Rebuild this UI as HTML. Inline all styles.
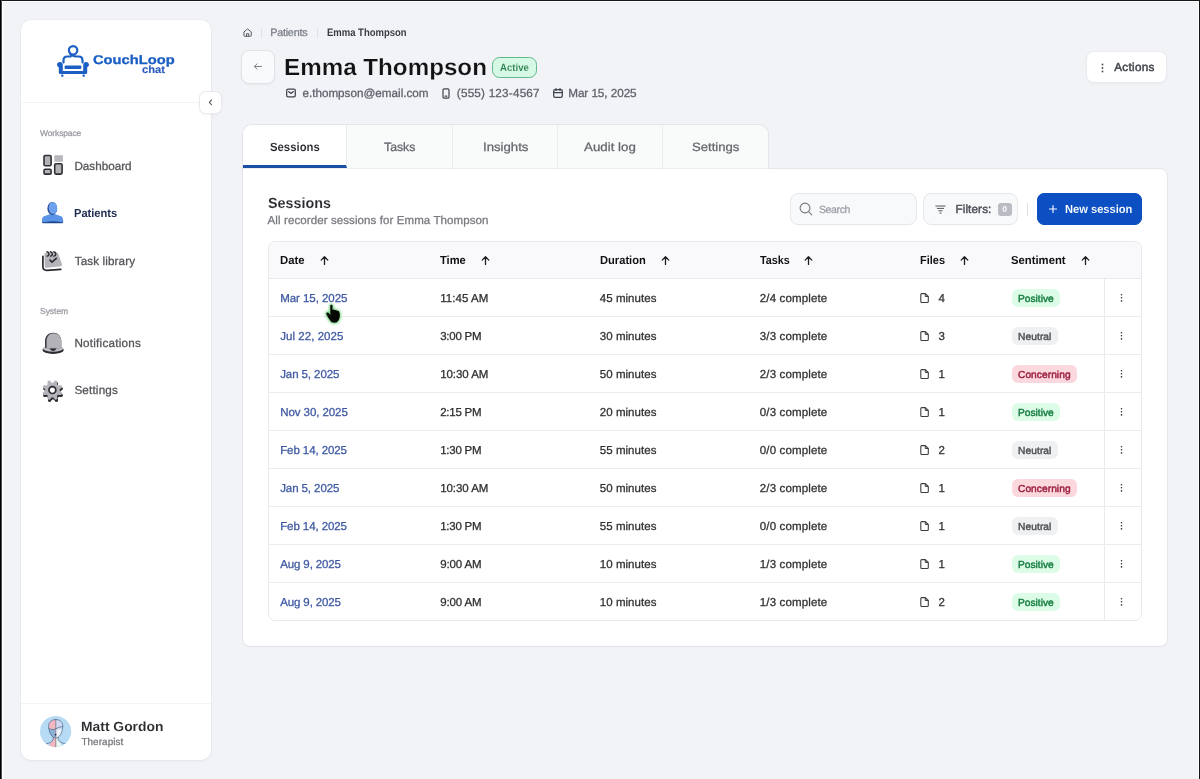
<!DOCTYPE html>
<html lang="en">
<head>
<meta charset="utf-8">
<title>CouchLoop chat - Emma Thompson - Sessions</title>
<style>
*{box-sizing:border-box;margin:0;padding:0}
html,body{width:1200px;height:779px;overflow:hidden}
body{background:#f1f3f7;font-family:"Liberation Sans",sans-serif;color:#2b2d33;position:relative;text-rendering:geometricPrecision}
#app{position:absolute;left:0;top:0;width:1200px;height:779px;overflow:hidden;background:#f1f3f7;filter:blur(.3px)}
.a{position:absolute}
.t{position:absolute;white-space:nowrap;line-height:1;transform-origin:0 50%;font-weight:400;text-decoration:none;-webkit-text-stroke:.28px}
.t.md{-webkit-text-stroke:.45px}
svg{position:absolute;overflow:visible}
#sidebar{position:absolute;left:21px;top:20px;width:190px;height:740px;background:#fff;border-radius:10px;box-shadow:0 0 0 1px rgba(30,40,70,.025),0 1px 3px rgba(30,40,70,.05)}
.hr{position:absolute;height:1px;background:#f2f3f5}
#collapse{position:absolute;left:199px;top:91px;width:22.5px;height:22.5px;background:#fff;border:1px solid #e8e9ed;border-radius:6.5px;box-shadow:0 1px 2px rgba(30,40,70,.05)}
#main{position:absolute;left:243px;top:169px;width:924px;height:477px;background:#fff;border-radius:0 7px 7px 7px;box-shadow:0 0 0 1px rgba(20,20,30,.05),0 1px 1px rgba(20,20,30,.02)}
#tabs{position:absolute;left:243px;top:125px;width:525px;height:44px;background:#f9fafa;border-radius:9px 9px 0 0;box-shadow:0 0 0 1px rgba(20,25,40,.06)}
.tab{position:absolute;top:0;height:44px;border-right:1px solid #ecedef}
.tab.on{background:#fff;border-bottom:3px solid #1b4fa3;height:43px;border-radius:9px 0 0 0;border-right:1px solid #e6e8ea}
.btn{position:absolute;border:1px solid #e4e6ea;border-radius:8px;background:#fff}
.badge{position:absolute;border-radius:6px}
#tbl{position:absolute;left:268px;top:241px;width:874px;height:380px;border:1px solid #e8e9eb;border-radius:7px;background:#fff;overflow:hidden}
#thead{position:absolute;left:0;top:0;width:874px;height:37px;background:#f9f9fb;border-bottom:1px solid #e9eaec}
.rl{position:absolute;left:0;width:874px;height:1px;background:#ebeced}
.vl{position:absolute;left:835px;top:37px;width:1px;height:343px;background:#e9eaec}
</style>
</head>
<body>
<div id="app">
<aside aria-label="Sidebar">
<div id="sidebar"></div>
<div class="hr" style="left:21px;top:102px;width:190px"></div>
<div class="hr" style="left:21px;top:703px;width:190px"></div>
<div id="collapse"><svg style="left:7px;top:6px" width="8" height="9" viewBox="0 0 8 9"><path d="M4.5 2L2.3 4.3l2.2 2.3" fill="none" stroke="#5a5e66" stroke-width="1.15" stroke-linecap="round" stroke-linejoin="round"/></svg></div>
<svg style="left:57px;top:45px" width="32" height="32" viewBox="0 0 32 32">
<g fill="none" stroke="#1b5fc4" stroke-width="2.2" stroke-linecap="round" stroke-linejoin="round"><circle cx="16.1" cy="5.3" r="4.2"/><path d="M6.5 17.4v-2.1c0-2.3 1.5-3.8 3.8-3.8h3.4M12.9 8.3c1.6 2.8 3.8 3.2 6.8 3.2h2c2.3 0 3.8 1.5 3.8 3.8v2.1"/></g>
<path d="M2.9 17.1c-1.7 0-2.9 1.2-2.9 2.7 0 1.2.7 2.1 1.8 2.5v5.3c0 .9.6 1.5 1.5 1.5h25.4c.9 0 1.5-.6 1.5-1.5v-5.3c1.1-.4 1.8-1.3 1.8-2.5 0-1.5-1.2-2.7-2.9-2.7s-2.9 1.2-2.9 2.9v6H5.8v-6c0-1.7-1.2-2.9-2.9-2.9z" fill="#1b5fc4"/>
<rect x="7.6" y="20.4" width="16.8" height="3.5" rx="1.2" fill="#1b5fc4"/>
<rect x="4.2" y="29.6" width="2.2" height="2.2" rx="0.5" fill="#1b5fc4"/>
<rect x="25.6" y="29.6" width="2.2" height="2.2" rx="0.5" fill="#1b5fc4"/>
</svg>
<span class="t" style="left:93.0px;top:54.00px;font-size:12.7px;color:#1b5fc4;font-weight:700;-webkit-text-stroke:0.3px #1b5fc4;transform:scaleX(1.158)">CouchLoop</span>
<span class="t" style="left:142.0px;top:65.00px;font-size:10.5px;color:#2a5cbc;font-weight:700;-webkit-text-stroke:0.15px #2a5cbc;transform:scaleX(1.065)">chat</span>
<span class="t" style="left:40.0px;top:129.00px;font-size:8.5px;color:#9a9ca2;letter-spacing:-0.13px">Workspace</span>
<nav>
<svg style="left:42px;top:154px" width="22" height="22" viewBox="0 0 22 22">
<rect x="12.3" y="1.2" width="8.6" height="6.6" rx="0.5" fill="#b7b7bb"/>
<rect x="2" y="1.5" width="7.1" height="10.2" rx="1.3" fill="#b2b2b7" stroke="#2e2e34" stroke-width="1.6"/>
<rect x="2" y="15.3" width="7.1" height="4.8" rx="1.2" fill="#b2b2b7" stroke="#2e2e34" stroke-width="1.6"/>
<rect x="12.7" y="9.7" width="7.4" height="10.4" rx="1.3" fill="#b2b2b7" stroke="#2e2e34" stroke-width="1.6"/>
</svg>
<a class="t" style="left:74.4px;top:161.00px;font-size:11.7px;color:#535459">Dashboard</a>
<svg style="left:41px;top:202px" width="23" height="22" viewBox="0 0 23 22">
<path d="M1 19.8c0-3.1 1.1-4.7 3.6-5.3l4.2-1.5h5.6l4.2 1.5c2.5.6 3.6 2.2 3.6 5.3 0 1-.6 1.5-1.7 1.5H2.7C1.6 21.3 1 20.8 1 19.8z" fill="#1f4690"/>
<path d="M1 18.9c0-3.1 1.1-4.5 3.6-5.1l4.2-1.5h5.6l4.2 1.5c2.5.6 3.6 2 3.6 5.1 0 .9-.6 1.3-1.7 1.3-6-1.3-10.6-1.3-16.8 0C1.6 20.2 1 19.8 1 18.9z" fill="#5b93e6"/>
<ellipse cx="11.3" cy="6.5" rx="4.9" ry="6.5" fill="#1f4690"/>
<ellipse cx="11.9" cy="6" rx="4.3" ry="5.9" fill="#6ea2ee"/>
</svg>
<a class="t" style="left:74.4px;top:208.00px;font-size:11.7px;color:#1d2c50;font-weight:700;-webkit-text-stroke:0;transform:scaleX(0.950)">Patients</a>
<svg style="left:41.2px;top:250px" width="22" height="22" viewBox="0 0 22 22">
<path d="M1.9 6.3V16.4c0 2.7 1.4 4 4.2 3.9L19.8 19.4" fill="none" stroke="#2b2b31" stroke-width="1.7" stroke-linecap="round" stroke-linejoin="round"/>
<path d="M3.4 4.2c0-1.1.7-1.8 1.8-1.8l10.2.2c1 0 1.7.5 2 1.4l3.6 10.2c.4 1.1-.2 2-1.4 2.1L5.8 17.7c-1.2.1-2-.6-2-1.8z" fill="#b4b4ba"/>
<path d="M6 1.8c1.4.2 2 1 2 2.1s-.6 2-1.9 2.2M9.4 1.8c1.4.2 2 1 2 2.1s-.6 2-1.9 2.2M12.8 1.8c1.4.2 2 1 2 2.1s-.6 2-1.9 2.2" fill="none" stroke="#2b2b31" stroke-width="1.4" stroke-linecap="round"/>
<path d="M9 10.2l2 1.9 4.3-3.8" fill="none" stroke="#2b2b31" stroke-width="1.7" stroke-linecap="round" stroke-linejoin="round"/>
</svg>
<a class="t" style="left:74.8px;top:256.00px;font-size:11.7px;color:#535459;letter-spacing:0.10px">Task library</a>
<span class="t" style="left:40.0px;top:307.00px;font-size:8.5px;color:#9a9ca2;letter-spacing:-0.03px">System</span>
<svg style="left:41.5px;top:332px" width="22" height="22" viewBox="0 0 22 22">
<ellipse cx="11.1" cy="18" rx="10.7" ry="3.9" fill="#2b2b31"/>
<ellipse cx="11.1" cy="16.6" rx="10.1" ry="3.1" fill="#bcbcc2"/>
<path d="M3.1 15.8V9.1C3.1 4 6.5.7 11.2.7c4.7 0 8.1 3.3 8.1 8.4v6.7c-2.8 1-13.4 1-16.2 0z" fill="#2b2b31"/>
<path d="M4.5 16V9.3c0-4.9 2.9-8.1 7-8.1 4.5 0 7.8 3.2 7.8 8.1v6.5c-3 1-11.8 1.1-14.8.2z" fill="#b2b2b8"/>
<path d="M7.9 16.2c.5 1.9 1.6 2.7 3.2 2.7s2.7-.8 3.2-2.7c-2 .3-4.4.3-6.4 0z" fill="#2b2b31"/>
</svg>
<a class="t" style="left:74.4px;top:338.00px;font-size:11.7px;color:#535459;letter-spacing:0.23px">Notifications</a>
<svg style="left:41.5px;top:380px" width="22" height="22" viewBox="0 0 22 22">
<path d="M18.5 12.0L18.5 12.5L18.7 13.0L19.8 13.8L20.9 14.7L20.9 15.4L20.7 16.0L20.4 16.6L19.9 17.1L18.5 17.0L17.1 16.7L16.6 16.9L16.3 17.3L15.9 17.6L15.7 18.1L16.0 19.5L16.1 20.9L15.6 21.4L15.0 21.7L14.4 21.9L13.7 21.9L12.8 20.8L12.0 19.7L11.5 19.5L11.0 19.5L10.5 19.5L10.0 19.7L9.2 20.8L8.3 21.9L7.6 21.9L7.0 21.7L6.4 21.4L5.9 20.9L6.0 19.5L6.3 18.1L6.1 17.6L5.7 17.3L5.4 16.9L4.9 16.7L3.5 17.0L2.1 17.1L1.6 16.6L1.3 16.0L1.1 15.4L1.1 14.7L2.2 13.8L3.3 13.0L3.5 12.5L3.5 12.0L3.5 11.5L3.3 11.0L2.2 10.2L1.1 9.3L1.1 8.6L1.3 8.0L1.6 7.4L2.1 6.9L3.5 7.0L4.9 7.3L5.4 7.1L5.7 6.7L6.1 6.4L6.3 5.9L6.0 4.5L5.9 3.1L6.4 2.6L7.0 2.3L7.6 2.1L8.3 2.1L9.2 3.2L10.0 4.3L10.5 4.5L11.0 4.5L11.5 4.5L12.0 4.3L12.8 3.2L13.7 2.1L14.4 2.1L15.0 2.3L15.6 2.6L16.1 3.1L16.0 4.5L15.7 5.9L15.9 6.4L16.3 6.7L16.6 7.1L17.1 7.3L18.5 7.0L19.9 6.9L20.4 7.4L20.7 8.0L20.9 8.6L20.9 9.3L19.8 10.2L18.7 11.0L18.5 11.5Z" fill="#2b2b31"/>
<path d="M17.7 10.1L17.7 10.6L17.8 11.1L18.9 11.8L20.0 12.7L20.0 13.3L19.7 14.0L19.5 14.6L19.0 15.0L17.6 14.9L16.4 14.7L15.9 14.9L15.6 15.3L15.2 15.6L15.0 16.1L15.2 17.3L15.3 18.7L14.9 19.2L14.3 19.4L13.6 19.7L13.0 19.7L12.1 18.6L11.4 17.5L10.9 17.4L10.4 17.4L9.9 17.4L9.4 17.5L8.7 18.6L7.8 19.7L7.2 19.7L6.5 19.4L5.9 19.2L5.5 18.7L5.6 17.3L5.8 16.1L5.6 15.6L5.2 15.3L4.9 14.9L4.4 14.7L3.2 14.9L1.8 15.0L1.3 14.6L1.1 14.0L0.8 13.3L0.8 12.7L1.9 11.8L3.0 11.1L3.1 10.6L3.1 10.1L3.1 9.6L3.0 9.1L1.9 8.4L0.8 7.5L0.8 6.9L1.1 6.2L1.3 5.6L1.8 5.2L3.2 5.3L4.4 5.5L4.9 5.3L5.2 4.9L5.6 4.6L5.8 4.1L5.6 2.9L5.5 1.5L5.9 1.0L6.5 0.8L7.2 0.5L7.8 0.5L8.7 1.6L9.4 2.7L9.9 2.8L10.4 2.8L10.9 2.8L11.4 2.7L12.1 1.6L13.0 0.5L13.6 0.5L14.3 0.8L14.9 1.0L15.3 1.5L15.2 2.9L15.0 4.1L15.2 4.6L15.6 4.9L15.9 5.3L16.4 5.5L17.6 5.3L19.0 5.2L19.5 5.6L19.7 6.2L20.0 6.9L20.0 7.5L18.9 8.4L17.8 9.1L17.7 9.6Z" fill="#b4b4ba"/>
<circle cx="10.4" cy="10.1" r="3.4" fill="#fff" stroke="#2b2b31" stroke-width="1.7"/>
</svg>
<a class="t" style="left:74.4px;top:385.00px;font-size:11.7px;color:#535459;letter-spacing:0.17px">Settings</a>
</nav>
<svg style="left:39.7px;top:715.7px" width="31.2" height="31.2" viewBox="0 0 32 32">
<defs><clipPath id="avc"><circle cx="16" cy="16" r="16"/></clipPath></defs>
<circle cx="16" cy="16" r="16" fill="#b7dbf4"/>
<g clip-path="url(#avc)">
<path d="M16.2 3.6c-4.4 0-7.4 2.8-7.4 7 0 1.1.2 2.2.5 3.2h6.9z" fill="#f2b8c2"/>
<path d="M16.2 3.6c4.4 0 7.2 2.8 7.2 7 0 1.1-.2 2.2-.5 3.2h-6.7z" fill="#cfd9f2"/>
<path d="M9.3 13.8c.5 3.8 2.3 6.8 4.6 8.1l2.3.6v-8.7z" fill="#8db0d6"/>
<path d="M22.9 13.8c-.5 3.8-2.2 6.8-4.5 8.1l-2.2.6v-8.7z" fill="#edf3fb"/>
<path d="M13.7 22.3l-.3 2.2c-.6 1.6-2 2.8-3.6 3.7V33h6.4V22.5z" fill="#f2b8c2"/>
<path d="M18.6 22.3l.3 2.2c.5 1.5 1.5 2.6 2.8 3.5V33h-5.5V22.5z" fill="#e9f5f1"/>
<g fill="none" stroke="#4d6b8c" stroke-width="0.75" stroke-linecap="round" stroke-linejoin="round">
<path d="M16.2 3.6c-4.4 0-7.4 2.8-7.4 7 0 1.1.2 2.2.5 3.2.5 3.8 2.3 6.8 4.6 8.1 1.5.7 3 .7 4.5 0 2.3-1.3 4-4.3 4.5-8.1.3-1 .5-2.1.5-3.2 0-4.2-2.8-7-7.2-7z"/>
<path d="M9 12.8c2.4 1.3 4.8 1.4 7.2.4 2.4-1.4 4.8-2.2 7-2.2M13.7 22.3l-.3 2.2c-.9 2.2-3.6 3.4-6.9 4M18.6 22.3l.3 2.2c.9 2.2 3.6 3.4 7 4"/>
</g>
<path d="M16.2 3.8V32" fill="none" stroke="#7a5d72" stroke-width="0.7"/>
<ellipse cx="16" cy="19.3" rx="1" ry="0.8" fill="#16263f"/>
</g>
</svg>
<span class="t" style="left:80.8px;top:720.00px;font-size:13.3px;color:#2a2a2f;font-weight:700;-webkit-text-stroke:0.08px #fff;transform:scaleX(1.043)">Matt Gordon</span>
<span class="t" style="left:81.4px;top:738.00px;font-size:9.9px;color:#77787d;letter-spacing:0.10px">Therapist</span>
</aside>
<header>
<svg style="left:242.5px;top:28.2px" width="9.2" height="9.2" viewBox="0 0 10 10"><path d="M1 4.3L5 1l4 3.3V8.2c0 .5-.3.8-.8.8H1.8C1.3 9 1 8.7 1 8.2z" fill="none" stroke="#4b4f58" stroke-width="1" stroke-linejoin="round"/><path d="M3.8 9V6.2h2.4V9" fill="none" stroke="#4b4f58" stroke-width="1"/></svg>
<div class="a" style="left:261px;top:28px;width:1px;height:10px;background:#dfe1e6"></div>
<a class="t" style="left:270.2px;top:28.00px;font-size:10.8px;color:#7c8089;letter-spacing:-0.23px">Patients</a>
<div class="a" style="left:317px;top:28px;width:1px;height:10px;background:#dfe1e6"></div>
<span class="t" style="left:326.8px;top:28.00px;font-size:10.8px;color:#3a3c44;font-weight:700;-webkit-text-stroke:0;transform:scaleX(0.879)">Emma Thompson</span>
<div class="btn" style="left:241px;top:50px;width:33.5px;height:33.5px;background:#f9fafb;border-color:#e0e2e6;border-radius:8px;box-shadow:0 1px 2px rgba(30,40,70,.05)"><svg style="left:10.8px;top:10.9px" width="10" height="9" viewBox="0 0 10 9"><path d="M8.4 4.5H1.4M4.1 1.8L1.4 4.5l2.7 2.7" fill="none" stroke="#7b7f88" stroke-width="1" stroke-linecap="round" stroke-linejoin="round"/></svg></div>
<h1 class="t" style="left:283.8px;top:56.00px;font-size:23.4px;color:#121214;font-weight:700;-webkit-text-stroke:0.25px #f1f3f7;transform:scaleX(1.034)">Emma Thompson</h1>
<div class="badge" style="left:492px;top:57px;width:44.5px;height:20.5px;background:#d5f9e4;border:1px solid #62b88a;border-radius:7.5px"></div>
<span class="t" style="left:499.6px;top:63.00px;font-size:10.5px;color:#257a4a;font-weight:700;-webkit-text-stroke:0.12px #d5f9e4;transform:scaleX(0.914)">Active</span>
<svg style="left:286px;top:88px" width="10" height="10" viewBox="0 0 10 10"><rect x=".7" y="1.2" width="8.6" height="7.6" rx="1.3" fill="none" stroke="#3f434b" stroke-width="1.25"/><path d="M2.6 3.6L5 5.4l2.4-1.8" fill="none" stroke="#3f434b" stroke-width="1.25" stroke-linecap="round" stroke-linejoin="round"/></svg>
<span class="t" style="left:302.4px;top:88.00px;font-size:11.7px;color:#5e626a">e.thompson@email.com</span>
<svg style="left:442px;top:87.5px" width="8" height="11" viewBox="0 0 8 11"><rect x="1" y=".8" width="6" height="9.4" rx="1.3" fill="none" stroke="#3f434b" stroke-width="1.2"/><path d="M3.2 8.2h1.6" stroke="#3f434b" stroke-width="1.25" stroke-linecap="round"/></svg>
<span class="t" style="left:456.8px;top:88.00px;font-size:11.7px;color:#5e626a;letter-spacing:0.22px">(555) 123-4567</span>
<svg style="left:552.5px;top:88px" width="10" height="10" viewBox="0 0 10 10"><rect x=".7" y="1.7" width="8.6" height="7.6" rx="1.3" fill="none" stroke="#3f434b" stroke-width="1.25"/><path d="M.8 4.5h8.4M3 .6v2M7 .6v2" fill="none" stroke="#3f434b" stroke-width="1.25" stroke-linecap="round"/></svg>
<span class="t" style="left:568.2px;top:88.00px;font-size:11.7px;color:#5e626a;letter-spacing:-0.04px">Mar 15, 2025</span>
<div class="btn" style="left:1086px;top:51px;width:81px;height:31.5px;border-color:#e9ebef;border-radius:8px;box-shadow:0 1px 2px rgba(30,40,70,.04)"></div>
<svg style="left:1100.5px;top:62.5px" width="3" height="10" viewBox="0 0 3 10"><circle cx="1.5" cy="1.5" r=".9" fill="#4a4d55"/><circle cx="1.5" cy="5" r=".9" fill="#4a4d55"/><circle cx="1.5" cy="8.5" r=".9" fill="#4a4d55"/></svg>
<span class="t md" style="left:1114.2px;top:62.00px;font-size:11.7px;color:#3f4249;letter-spacing:0.31px">Actions</span>
</header>
<nav aria-label="Patient sections">
<div id="tabs">
<div class="tab on" style="left:0px;width:104px"></div>
<div class="tab" style="left:104px;width:105.5px"></div>
<div class="tab" style="left:209.5px;width:105.0px"></div>
<div class="tab" style="left:314.5px;width:105.0px"></div>
<div class="tab" style="left:419.5px;width:105.5px;border-right:none"></div>
</div>
<a class="t" style="left:269.6px;top:141.00px;font-size:12px;color:#2a2a2f;font-weight:700;-webkit-text-stroke:0.06px #fff;transform:scaleX(0.945)">Sessions</a>
<a class="t" style="left:384.0px;top:141.00px;font-size:12px;color:#66686f;transform:scaleX(1.023)">Tasks</a>
<a class="t" style="left:482.6px;top:141.00px;font-size:12px;color:#66686f;transform:scaleX(1.098)">Insights</a>
<a class="t" style="left:584.0px;top:141.00px;font-size:12px;color:#66686f;transform:scaleX(1.109)">Audit log</a>
<a class="t" style="left:692.2px;top:141.00px;font-size:12px;color:#66686f;transform:scaleX(1.093)">Settings</a>
</nav>
<main>
<div id="main"></div>
<h2 class="t" style="left:267.6px;top:197.00px;font-size:14.7px;color:#2a2a2f;font-weight:700;-webkit-text-stroke:0.08px #fff;transform:scaleX(0.977)">Sessions</h2>
<span class="t" style="left:267.6px;top:216.00px;font-size:11.5px;color:#77797f;letter-spacing:0.10px">All recorder sessions for Emma Thompson</span>
<div class="btn" style="left:790px;top:193px;width:127px;height:32px;background:#f8f9fb;border-color:#e5e7eb;border-radius:8px"></div>
<svg style="left:799px;top:202px" width="14" height="14" viewBox="0 0 14 14"><circle cx="6" cy="6" r="4.9" fill="none" stroke="#74787f" stroke-width="1.1"/><path d="M9.6 9.6l3.2 3.2" stroke="#74787f" stroke-width="1.1" stroke-linecap="round"/></svg>
<span class="t" style="left:819.0px;top:205.00px;font-size:10.5px;color:#9da1a8;letter-spacing:-0.38px">Search</span>
<div class="btn" style="left:923px;top:193px;width:95px;height:32px;background:#f8f9fb;border-color:#e5e7eb;border-radius:8px"></div>
<svg style="left:934.5px;top:204.5px" width="11" height="9" viewBox="0 0 11 9"><path d="M.8 1h9.4M2.3 3.4h6.4M3.8 5.8h3.4M4.9 8.1h1.2" stroke="#55585f" stroke-width="1" stroke-linecap="round"/></svg>
<span class="t md" style="left:955.4px;top:204.00px;font-size:11.7px;color:#4e5158;letter-spacing:0.13px">Filters:</span>
<div class="badge" style="left:998px;top:202.5px;width:13.5px;height:13.5px;background:#b9bcc2;border-radius:3px"></div>
<span class="t" style="left:1002.2px;top:205.00px;font-size:8.5px;color:#fff;font-weight:700;-webkit-text-stroke:0;letter-spacing:0.47px">0</span>
<div class="a" style="left:1027px;top:203px;width:1px;height:13px;background:#dcdfe4"></div>
<div class="btn" style="left:1037px;top:193px;width:105px;height:32px;background:#0b4fc2;border-color:#0b4fc2;border-radius:7px"></div>
<svg style="left:1049px;top:205px" width="8" height="8" viewBox="0 0 8 8"><path d="M4 .5v7M.5 4h7" stroke="#fff" stroke-width="1.1" stroke-linecap="round"/></svg>
<span class="t" style="left:1065.4px;top:204.00px;font-size:11.7px;color:#fff;font-weight:700;-webkit-text-stroke:0.08px #0b4fc2;transform:scaleX(0.952)">New session</span>
<div id="tbl"><div id="thead"></div><div class="vl"></div>
<div class="rl" style="top:74px"></div>
<div class="rl" style="top:112px"></div>
<div class="rl" style="top:150px"></div>
<div class="rl" style="top:188px"></div>
<div class="rl" style="top:226px"></div>
<div class="rl" style="top:264px"></div>
<div class="rl" style="top:302px"></div>
<div class="rl" style="top:340px"></div>
</div>
<span class="t" style="left:280.2px;top:255.00px;font-size:11.6px;color:#111113;font-weight:700;-webkit-text-stroke:0;transform:scaleX(0.978)">Date</span>
<svg style="left:319.5px;top:255.7px" width="9" height="9" viewBox="0 0 9 9"><path d="M4.5 8.4V.9M1.2 4.1L4.5.8l3.3 3.3" fill="none" stroke="#1c1c20" stroke-width="1.3" stroke-linecap="round" stroke-linejoin="round"/></svg>
<span class="t" style="left:440.2px;top:255.00px;font-size:11.6px;color:#111113;font-weight:700;-webkit-text-stroke:0;transform:scaleX(0.961)">Time</span>
<svg style="left:480.5px;top:255.7px" width="9" height="9" viewBox="0 0 9 9"><path d="M4.5 8.4V.9M1.2 4.1L4.5.8l3.3 3.3" fill="none" stroke="#1c1c20" stroke-width="1.3" stroke-linecap="round" stroke-linejoin="round"/></svg>
<span class="t" style="left:599.8px;top:255.00px;font-size:11.6px;color:#111113;font-weight:700;-webkit-text-stroke:0;transform:scaleX(0.961)">Duration</span>
<svg style="left:660.5px;top:255.7px" width="9" height="9" viewBox="0 0 9 9"><path d="M4.5 8.4V.9M1.2 4.1L4.5.8l3.3 3.3" fill="none" stroke="#1c1c20" stroke-width="1.3" stroke-linecap="round" stroke-linejoin="round"/></svg>
<span class="t" style="left:759.8px;top:255.00px;font-size:11.6px;color:#111113;font-weight:700;-webkit-text-stroke:0;transform:scaleX(0.931)">Tasks</span>
<svg style="left:804.3px;top:255.7px" width="9" height="9" viewBox="0 0 9 9"><path d="M4.5 8.4V.9M1.2 4.1L4.5.8l3.3 3.3" fill="none" stroke="#1c1c20" stroke-width="1.3" stroke-linecap="round" stroke-linejoin="round"/></svg>
<span class="t" style="left:919.6px;top:255.00px;font-size:11.6px;color:#111113;font-weight:700;-webkit-text-stroke:0;transform:scaleX(0.946)">Files</span>
<svg style="left:959.5px;top:255.7px" width="9" height="9" viewBox="0 0 9 9"><path d="M4.5 8.4V.9M1.2 4.1L4.5.8l3.3 3.3" fill="none" stroke="#1c1c20" stroke-width="1.3" stroke-linecap="round" stroke-linejoin="round"/></svg>
<span class="t" style="left:1011.4px;top:255.00px;font-size:11.6px;color:#111113;font-weight:700;-webkit-text-stroke:0;transform:scaleX(0.974)">Sentiment</span>
<svg style="left:1080.5px;top:255.7px" width="9" height="9" viewBox="0 0 9 9"><path d="M4.5 8.4V.9M1.2 4.1L4.5.8l3.3 3.3" fill="none" stroke="#1c1c20" stroke-width="1.3" stroke-linecap="round" stroke-linejoin="round"/></svg>
<a class="t" style="left:280.2px;top:294.00px;font-size:11.5px;color:#3f59a2;letter-spacing:-0.05px">Mar 15, 2025</a>
<span class="t" style="left:440.2px;top:294.00px;font-size:11.5px;color:#303033;letter-spacing:0.06px">11:45 AM</span>
<span class="t" style="left:599.8px;top:294.00px;font-size:11.5px;color:#303033;letter-spacing:0.04px">45 minutes</span>
<span class="t" style="left:759.8px;top:294.00px;font-size:11.5px;color:#303033;letter-spacing:0.14px">2/4 complete</span>
<svg style="left:920px;top:293.0px" width="9" height="10" viewBox="0 0 9 10"><path d="M1.8.6h3.5L8.3 3.5v5c0 .6-.4 1-1 1H1.8c-.6 0-1-.4-1-1V1.6c0-.6.4-1 1-1z" fill="none" stroke="#3e3e42" stroke-width="1.1" stroke-linejoin="round"/><path d="M5.3.8v2.7h2.8" fill="none" stroke="#3e3e42" stroke-width="1" stroke-linejoin="round"/></svg>
<span class="t" style="left:938.6px;top:294.00px;font-size:11.5px;color:#303033">4</span>
<div class="badge" style="left:1012px;top:288.7px;width:48px;height:18.5px;background:#dcfce7"></div>
<span class="t md" style="left:1018.0px;top:295.00px;font-size:10.2px;color:#1a8044">Positive</span>
<svg style="left:1120px;top:293.2px" width="3" height="9" viewBox="0 0 3 9"><circle cx="1.5" cy="1.7" r=".8" fill="#2f3138"/><circle cx="1.5" cy="4.8" r=".8" fill="#2f3138"/><circle cx="1.5" cy="7.9" r=".8" fill="#2f3138"/></svg>
<a class="t" style="left:280.2px;top:332.00px;font-size:11.5px;color:#3f59a2;letter-spacing:0.05px">Jul 22, 2025</a>
<span class="t" style="left:440.2px;top:332.00px;font-size:11.5px;color:#303033;letter-spacing:-0.24px">3:00 PM</span>
<span class="t" style="left:599.8px;top:332.00px;font-size:11.5px;color:#303033;letter-spacing:0.04px">30 minutes</span>
<span class="t" style="left:759.8px;top:332.00px;font-size:11.5px;color:#303033;letter-spacing:0.14px">3/3 complete</span>
<svg style="left:920px;top:331.0px" width="9" height="10" viewBox="0 0 9 10"><path d="M1.8.6h3.5L8.3 3.5v5c0 .6-.4 1-1 1H1.8c-.6 0-1-.4-1-1V1.6c0-.6.4-1 1-1z" fill="none" stroke="#3e3e42" stroke-width="1.1" stroke-linejoin="round"/><path d="M5.3.8v2.7h2.8" fill="none" stroke="#3e3e42" stroke-width="1" stroke-linejoin="round"/></svg>
<span class="t" style="left:938.6px;top:332.00px;font-size:11.5px;color:#303033">3</span>
<div class="badge" style="left:1012px;top:326.7px;width:45.5px;height:18.5px;background:#eef0f1"></div>
<span class="t md" style="left:1018.0px;top:333.00px;font-size:10.2px;color:#505356;letter-spacing:0.09px">Neutral</span>
<svg style="left:1120px;top:331.2px" width="3" height="9" viewBox="0 0 3 9"><circle cx="1.5" cy="1.7" r=".8" fill="#2f3138"/><circle cx="1.5" cy="4.8" r=".8" fill="#2f3138"/><circle cx="1.5" cy="7.9" r=".8" fill="#2f3138"/></svg>
<a class="t" style="left:280.2px;top:370.00px;font-size:11.5px;color:#3f59a2;letter-spacing:-0.09px">Jan 5, 2025</a>
<span class="t" style="left:440.2px;top:370.00px;font-size:11.5px;color:#303033;letter-spacing:-0.06px">10:30 AM</span>
<span class="t" style="left:599.8px;top:370.00px;font-size:11.5px;color:#303033;letter-spacing:0.04px">50 minutes</span>
<span class="t" style="left:759.8px;top:370.00px;font-size:11.5px;color:#303033;letter-spacing:0.14px">2/3 complete</span>
<svg style="left:920px;top:369.0px" width="9" height="10" viewBox="0 0 9 10"><path d="M1.8.6h3.5L8.3 3.5v5c0 .6-.4 1-1 1H1.8c-.6 0-1-.4-1-1V1.6c0-.6.4-1 1-1z" fill="none" stroke="#3e3e42" stroke-width="1.1" stroke-linejoin="round"/><path d="M5.3.8v2.7h2.8" fill="none" stroke="#3e3e42" stroke-width="1" stroke-linejoin="round"/></svg>
<span class="t" style="left:938.6px;top:370.00px;font-size:11.5px;color:#303033">1</span>
<div class="badge" style="left:1012px;top:364.7px;width:65px;height:18.5px;background:#fbd7de"></div>
<span class="t md" style="left:1018.0px;top:371.00px;font-size:10.2px;color:#9c1f40;letter-spacing:0.05px">Concerning</span>
<svg style="left:1120px;top:369.2px" width="3" height="9" viewBox="0 0 3 9"><circle cx="1.5" cy="1.7" r=".8" fill="#2f3138"/><circle cx="1.5" cy="4.8" r=".8" fill="#2f3138"/><circle cx="1.5" cy="7.9" r=".8" fill="#2f3138"/></svg>
<a class="t" style="left:280.2px;top:408.00px;font-size:11.5px;color:#3f59a2;letter-spacing:-0.07px">Nov 30, 2025</a>
<span class="t" style="left:440.2px;top:408.00px;font-size:11.5px;color:#303033;letter-spacing:-0.24px">2:15 PM</span>
<span class="t" style="left:599.8px;top:408.00px;font-size:11.5px;color:#303033;letter-spacing:0.04px">20 minutes</span>
<span class="t" style="left:759.8px;top:408.00px;font-size:11.5px;color:#303033;letter-spacing:0.14px">0/3 complete</span>
<svg style="left:920px;top:407.0px" width="9" height="10" viewBox="0 0 9 10"><path d="M1.8.6h3.5L8.3 3.5v5c0 .6-.4 1-1 1H1.8c-.6 0-1-.4-1-1V1.6c0-.6.4-1 1-1z" fill="none" stroke="#3e3e42" stroke-width="1.1" stroke-linejoin="round"/><path d="M5.3.8v2.7h2.8" fill="none" stroke="#3e3e42" stroke-width="1" stroke-linejoin="round"/></svg>
<span class="t" style="left:938.6px;top:408.00px;font-size:11.5px;color:#303033">1</span>
<div class="badge" style="left:1012px;top:402.7px;width:48px;height:18.5px;background:#dcfce7"></div>
<span class="t md" style="left:1018.0px;top:409.00px;font-size:10.2px;color:#1a8044">Positive</span>
<svg style="left:1120px;top:407.2px" width="3" height="9" viewBox="0 0 3 9"><circle cx="1.5" cy="1.7" r=".8" fill="#2f3138"/><circle cx="1.5" cy="4.8" r=".8" fill="#2f3138"/><circle cx="1.5" cy="7.9" r=".8" fill="#2f3138"/></svg>
<a class="t" style="left:280.2px;top:446.00px;font-size:11.5px;color:#3f59a2;letter-spacing:-0.09px">Feb 14, 2025</a>
<span class="t" style="left:440.2px;top:446.00px;font-size:11.5px;color:#303033;letter-spacing:-0.24px">1:30 PM</span>
<span class="t" style="left:599.8px;top:446.00px;font-size:11.5px;color:#303033;letter-spacing:0.04px">55 minutes</span>
<span class="t" style="left:759.8px;top:446.00px;font-size:11.5px;color:#303033;letter-spacing:0.14px">0/0 complete</span>
<svg style="left:920px;top:445.0px" width="9" height="10" viewBox="0 0 9 10"><path d="M1.8.6h3.5L8.3 3.5v5c0 .6-.4 1-1 1H1.8c-.6 0-1-.4-1-1V1.6c0-.6.4-1 1-1z" fill="none" stroke="#3e3e42" stroke-width="1.1" stroke-linejoin="round"/><path d="M5.3.8v2.7h2.8" fill="none" stroke="#3e3e42" stroke-width="1" stroke-linejoin="round"/></svg>
<span class="t" style="left:938.6px;top:446.00px;font-size:11.5px;color:#303033">2</span>
<div class="badge" style="left:1012px;top:440.7px;width:45.5px;height:18.5px;background:#eef0f1"></div>
<span class="t md" style="left:1018.0px;top:447.00px;font-size:10.2px;color:#505356;letter-spacing:0.09px">Neutral</span>
<svg style="left:1120px;top:445.2px" width="3" height="9" viewBox="0 0 3 9"><circle cx="1.5" cy="1.7" r=".8" fill="#2f3138"/><circle cx="1.5" cy="4.8" r=".8" fill="#2f3138"/><circle cx="1.5" cy="7.9" r=".8" fill="#2f3138"/></svg>
<a class="t" style="left:280.2px;top:484.00px;font-size:11.5px;color:#3f59a2;letter-spacing:-0.09px">Jan 5, 2025</a>
<span class="t" style="left:440.2px;top:484.00px;font-size:11.5px;color:#303033;letter-spacing:-0.06px">10:30 AM</span>
<span class="t" style="left:599.8px;top:484.00px;font-size:11.5px;color:#303033;letter-spacing:0.04px">50 minutes</span>
<span class="t" style="left:759.8px;top:484.00px;font-size:11.5px;color:#303033;letter-spacing:0.14px">2/3 complete</span>
<svg style="left:920px;top:483.0px" width="9" height="10" viewBox="0 0 9 10"><path d="M1.8.6h3.5L8.3 3.5v5c0 .6-.4 1-1 1H1.8c-.6 0-1-.4-1-1V1.6c0-.6.4-1 1-1z" fill="none" stroke="#3e3e42" stroke-width="1.1" stroke-linejoin="round"/><path d="M5.3.8v2.7h2.8" fill="none" stroke="#3e3e42" stroke-width="1" stroke-linejoin="round"/></svg>
<span class="t" style="left:938.6px;top:484.00px;font-size:11.5px;color:#303033">1</span>
<div class="badge" style="left:1012px;top:478.7px;width:65px;height:18.5px;background:#fbd7de"></div>
<span class="t md" style="left:1018.0px;top:485.00px;font-size:10.2px;color:#9c1f40;letter-spacing:0.05px">Concerning</span>
<svg style="left:1120px;top:483.2px" width="3" height="9" viewBox="0 0 3 9"><circle cx="1.5" cy="1.7" r=".8" fill="#2f3138"/><circle cx="1.5" cy="4.8" r=".8" fill="#2f3138"/><circle cx="1.5" cy="7.9" r=".8" fill="#2f3138"/></svg>
<a class="t" style="left:280.2px;top:522.00px;font-size:11.5px;color:#3f59a2;letter-spacing:-0.09px">Feb 14, 2025</a>
<span class="t" style="left:440.2px;top:522.00px;font-size:11.5px;color:#303033;letter-spacing:-0.24px">1:30 PM</span>
<span class="t" style="left:599.8px;top:522.00px;font-size:11.5px;color:#303033;letter-spacing:0.04px">55 minutes</span>
<span class="t" style="left:759.8px;top:522.00px;font-size:11.5px;color:#303033;letter-spacing:0.14px">0/0 complete</span>
<svg style="left:920px;top:521.0px" width="9" height="10" viewBox="0 0 9 10"><path d="M1.8.6h3.5L8.3 3.5v5c0 .6-.4 1-1 1H1.8c-.6 0-1-.4-1-1V1.6c0-.6.4-1 1-1z" fill="none" stroke="#3e3e42" stroke-width="1.1" stroke-linejoin="round"/><path d="M5.3.8v2.7h2.8" fill="none" stroke="#3e3e42" stroke-width="1" stroke-linejoin="round"/></svg>
<span class="t" style="left:938.6px;top:522.00px;font-size:11.5px;color:#303033">1</span>
<div class="badge" style="left:1012px;top:516.7px;width:45.5px;height:18.5px;background:#eef0f1"></div>
<span class="t md" style="left:1018.0px;top:523.00px;font-size:10.2px;color:#505356;letter-spacing:0.09px">Neutral</span>
<svg style="left:1120px;top:521.2px" width="3" height="9" viewBox="0 0 3 9"><circle cx="1.5" cy="1.7" r=".8" fill="#2f3138"/><circle cx="1.5" cy="4.8" r=".8" fill="#2f3138"/><circle cx="1.5" cy="7.9" r=".8" fill="#2f3138"/></svg>
<a class="t" style="left:280.2px;top:560.00px;font-size:11.5px;color:#3f59a2;letter-spacing:-0.12px">Aug 9, 2025</a>
<span class="t" style="left:440.2px;top:560.00px;font-size:11.5px;color:#303033;letter-spacing:-0.13px">9:00 AM</span>
<span class="t" style="left:599.8px;top:560.00px;font-size:11.5px;color:#303033;letter-spacing:0.04px">10 minutes</span>
<span class="t" style="left:759.8px;top:560.00px;font-size:11.5px;color:#303033;letter-spacing:0.14px">1/3 complete</span>
<svg style="left:920px;top:559.0px" width="9" height="10" viewBox="0 0 9 10"><path d="M1.8.6h3.5L8.3 3.5v5c0 .6-.4 1-1 1H1.8c-.6 0-1-.4-1-1V1.6c0-.6.4-1 1-1z" fill="none" stroke="#3e3e42" stroke-width="1.1" stroke-linejoin="round"/><path d="M5.3.8v2.7h2.8" fill="none" stroke="#3e3e42" stroke-width="1" stroke-linejoin="round"/></svg>
<span class="t" style="left:938.6px;top:560.00px;font-size:11.5px;color:#303033">1</span>
<div class="badge" style="left:1012px;top:554.7px;width:48px;height:18.5px;background:#dcfce7"></div>
<span class="t md" style="left:1018.0px;top:561.00px;font-size:10.2px;color:#1a8044">Positive</span>
<svg style="left:1120px;top:559.2px" width="3" height="9" viewBox="0 0 3 9"><circle cx="1.5" cy="1.7" r=".8" fill="#2f3138"/><circle cx="1.5" cy="4.8" r=".8" fill="#2f3138"/><circle cx="1.5" cy="7.9" r=".8" fill="#2f3138"/></svg>
<a class="t" style="left:280.2px;top:598.00px;font-size:11.5px;color:#3f59a2;letter-spacing:-0.12px">Aug 9, 2025</a>
<span class="t" style="left:440.2px;top:598.00px;font-size:11.5px;color:#303033;letter-spacing:-0.13px">9:00 AM</span>
<span class="t" style="left:599.8px;top:598.00px;font-size:11.5px;color:#303033;letter-spacing:0.04px">10 minutes</span>
<span class="t" style="left:759.8px;top:598.00px;font-size:11.5px;color:#303033;letter-spacing:0.14px">1/3 complete</span>
<svg style="left:920px;top:597.0px" width="9" height="10" viewBox="0 0 9 10"><path d="M1.8.6h3.5L8.3 3.5v5c0 .6-.4 1-1 1H1.8c-.6 0-1-.4-1-1V1.6c0-.6.4-1 1-1z" fill="none" stroke="#3e3e42" stroke-width="1.1" stroke-linejoin="round"/><path d="M5.3.8v2.7h2.8" fill="none" stroke="#3e3e42" stroke-width="1" stroke-linejoin="round"/></svg>
<span class="t" style="left:938.6px;top:598.00px;font-size:11.5px;color:#303033">2</span>
<div class="badge" style="left:1012px;top:592.7px;width:48px;height:18.5px;background:#dcfce7"></div>
<span class="t md" style="left:1018.0px;top:599.00px;font-size:10.2px;color:#1a8044">Positive</span>
<svg style="left:1120px;top:597.2px" width="3" height="9" viewBox="0 0 3 9"><circle cx="1.5" cy="1.7" r=".8" fill="#2f3138"/><circle cx="1.5" cy="4.8" r=".8" fill="#2f3138"/><circle cx="1.5" cy="7.9" r=".8" fill="#2f3138"/></svg>
</main>
<svg style="left:324px;top:302px" width="20" height="24" viewBox="0 0 20 24"><defs><filter id="glow" x="-50%" y="-50%" width="200%" height="200%"><feGaussianBlur stdDeviation="0.9"/></filter></defs><path d="M6.3 4C6.3 3.2 6.8 2.8 7.4 2.8 8 2.8 8.5 3.2 8.5 4L8.5 7.9C9 7.2 10.5 7.3 10.7 8.3 11.3 7.7 12.7 7.9 12.9 8.9 13.6 8.5 15 8.9 15.2 10 15.9 11.6 16.1 13.6 15.6 15.6 15.2 17.6 14.2 19.2 12.8 20.3 11.2 20.8 9.4 20.8 7.8 20.3 6.2 18.8 4.6 16.3 2.6 12.7 2 11.7 2.4 10.8 3.2 10.6 4 10.4 4.6 10.8 5.2 11.6L6.3 13.2Z" fill="#62d06a" stroke="#62d06a" stroke-width="2.6" stroke-linejoin="round" filter="url(#glow)" opacity=".8"/><path d="M6.3 4C6.3 3.2 6.8 2.8 7.4 2.8 8 2.8 8.5 3.2 8.5 4L8.5 7.9C9 7.2 10.5 7.3 10.7 8.3 11.3 7.7 12.7 7.9 12.9 8.9 13.6 8.5 15 8.9 15.2 10 15.9 11.6 16.1 13.6 15.6 15.6 15.2 17.6 14.2 19.2 12.8 20.3 11.2 20.8 9.4 20.8 7.8 20.3 6.2 18.8 4.6 16.3 2.6 12.7 2 11.7 2.4 10.8 3.2 10.6 4 10.4 4.6 10.8 5.2 11.6L6.3 13.2Z" fill="#050805"/></svg>
<div class="a" style="left:3px;top:2px;width:1195px;height:1px;background:#eceef2"></div><div class="a" style="left:3px;top:2px;width:1px;height:777px;background:#f7f8fa"></div><div class="a" style="left:2px;top:1px;width:1196px;height:1px;background:#fff"></div><div class="a" style="left:2px;top:1px;width:1px;height:778px;background:#fff"></div><div class="a" style="left:1198px;top:1px;width:1px;height:778px;background:#fff"></div><div class="a" style="left:0px;top:0px;width:1200px;height:1px;background:#17191e"></div><div class="a" style="left:0px;top:0px;width:1px;height:779px;background:#000"></div><div class="a" style="left:1px;top:0px;width:1px;height:779px;background:#4c4d52"></div><div class="a" style="left:1199px;top:0px;width:1px;height:779px;background:#14161b"></div>
</div>
</body>
</html>
